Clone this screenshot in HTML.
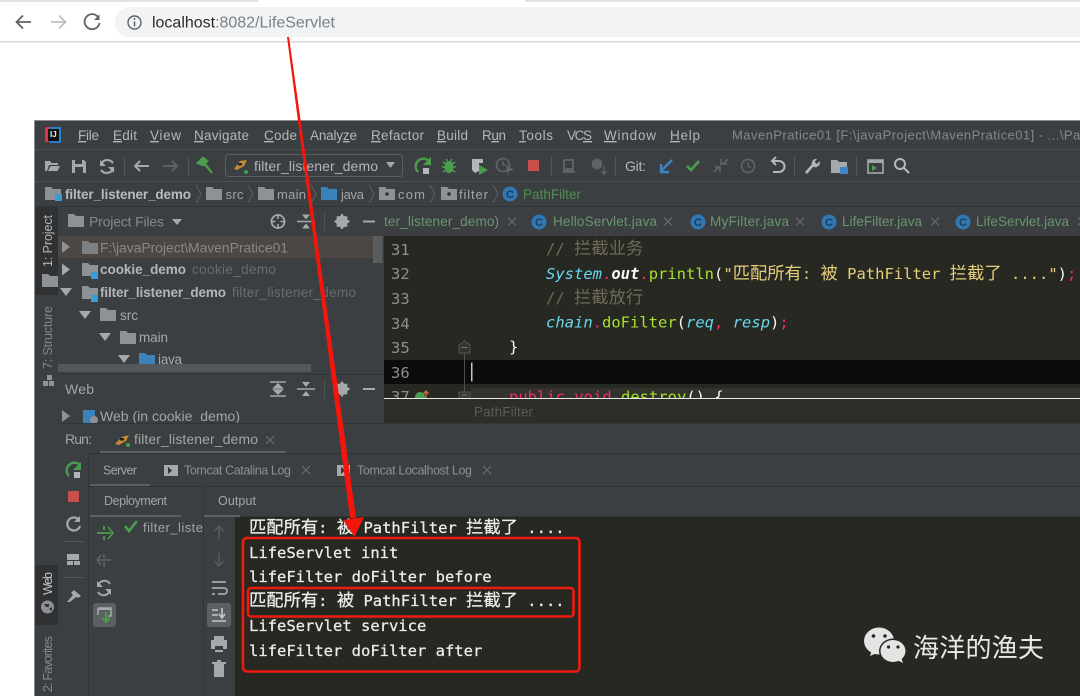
<!DOCTYPE html>
<html lang="zh"><head><meta charset="utf-8"><title>LifeServlet</title>
<style>
html,body{margin:0;padding:0;background:#fff;width:1080px;height:696px;overflow:hidden}
svg{display:block;position:absolute;left:0;top:0;filter:blur(.35px)}
text{font-family:"Liberation Sans","Noto Sans CJK SC",sans-serif;white-space:pre}
.m{font-size:13.5px;fill:#b4b6b8}
.g{font-size:13px;fill:#a2a5a7}
.t{font-size:13.5px;fill:#6a9470}
.x{stroke:#6a6d6f;stroke-width:1.2;fill:none}
.mono,.mono text{font-family:"DejaVu Sans Mono","Liberation Mono","Noto Sans CJK SC",monospace;font-size:15.5px}
.cj{font-family:"Noto Sans CJK SC",sans-serif;font-size:17.3px}
.con{fill:#ececec;stroke:#ececec;stroke-width:.25px}
.ic{fill:none;stroke:#a6a9ab;stroke-width:2}
.dim{fill:none;stroke:#5f6264;stroke-width:2}
</style></head><body>
<svg width="1080" height="696" viewBox="0 0 1080 696" xmlns="http://www.w3.org/2000/svg">
<defs>
<path id="f" d="M0 0h6l2 2h8v11H0z"/>
<g id="xm"><path class="x" d="M-4-4L4 4M4-4L-4 4"/></g>
<g id="chev"><path d="M0-9L5 0L0 9" fill="none" stroke="#5e6163" stroke-width="1"/></g>
<path id="ar" d="M0-6L8 0L0 6z"/>
<path id="ad" d="M-6 0H6L0 8z"/>
<g id="gear"><circle r="4.500" fill="none" stroke="#a6a9ab" stroke-width="3"/><path d="M0-7.500V7.500M-7.500 0H7.500M-5-5L5 5M5-5L-5 5" stroke="#a6a9ab" stroke-width="2.200"/></g>
<g id="cl"><path d="M-9 0H9" stroke="#a6a9ab" stroke-width="1.600"/><path d="M-4-7H4L0-2zM-4 7H4L0 2z" fill="#a6a9ab"/></g>
<g id="mn"><path d="M-6 0H6" stroke="#a6a9ab" stroke-width="2"/></g>
<g id="cc"><circle r="7.500" fill="#2f78b4"/><text x="-4" y="4" font-size="11" font-weight="bold" fill="#1b3c58">C</text></g>
</defs>

<!-- browser -->
<rect width="1080" height="41" fill="#fff"/>
<rect width="258" height="2" fill="#dee1e6"/><rect x="525" width="555" height="2" fill="#dee1e6"/>
<rect y="41" width="1080" height="1.500" fill="#d8dade"/>
<rect x="115" y="7" width="980" height="30" rx="15" fill="#f1f3f4"/>
<path d="M31 22H17M23 15.500L16.500 22L23 28.500" fill="none" stroke="#5f6368" stroke-width="1.800"/>
<path d="M51 22H65M59 15.500L65.500 22L59 28.500" fill="none" stroke="#bdc1c6" stroke-width="1.800"/>
<path d="M98 17A7.500 7.500 0 1 0 99.500 23" fill="none" stroke="#5f6368" stroke-width="1.800"/><path d="M99.500 14.500V20H94z" fill="#5f6368"/>
<circle cx="134.500" cy="22.500" r="6.500" fill="none" stroke="#5f6368" stroke-width="1.400"/><path d="M134.500 21.500V26.500M134.500 18V19.800" stroke="#5f6368" stroke-width="1.500"/>
<text x="152" y="27.500" font-size="16" textLength="183" lengthAdjust="spacingAndGlyphs" fill="#7b8084"><tspan fill="#2b2b2b">localhost</tspan>:8082/LifeServlet</text>

<!-- IDE base -->
<rect x="34" y="120" width="1046" height="576" fill="#3c3f41"/>
<rect x="34" y="120" width="1046" height="1" fill="#8b8d8e"/>
<rect x="34" y="120" width="1" height="576" fill="#8b8d8e"/>
<rect x="35" y="149" width="1045" height="1" fill="#4e4f4d"/>
<rect x="35" y="181" width="1045" height="1" fill="#4e4f4d"/>
<rect x="35" y="206" width="1045" height="1" fill="#323537"/>

<!-- logo -->
<rect x="45" y="127" width="15" height="15" rx="2" fill="#e0304f"/>
<path d="M50 127h11v16H50z" fill="#2a7fc9"/>
<rect x="48" y="129" width="11" height="12" fill="#111"/>
<text x="50" y="137" font-size="8" font-weight="bold" fill="#eee">IJ</text>

<!-- menu -->
<g class="m">
<text class="m" x="78" y="140" textLength="21"><tspan text-decoration="underline">F</tspan>ile</text>
<text class="m" x="113" y="140" textLength="24"><tspan text-decoration="underline">E</tspan>dit</text>
<text class="m" x="150" y="140" textLength="31"><tspan text-decoration="underline">V</tspan>iew</text>
<text class="m" x="194" y="140" textLength="55"><tspan text-decoration="underline">N</tspan>avigate</text>
<text class="m" x="264" y="140" textLength="33"><tspan text-decoration="underline">C</tspan>ode</text>
<text class="m" x="310" y="140" textLength="47">Analy<tspan text-decoration="underline">z</tspan>e</text>
<text class="m" x="371" y="140" textLength="53"><tspan text-decoration="underline">R</tspan>efactor</text>
<text class="m" x="437" y="140" textLength="31"><tspan text-decoration="underline">B</tspan>uild</text>
<text class="m" x="482" y="140" textLength="24">R<tspan text-decoration="underline">u</tspan>n</text>
<text class="m" x="519" y="140" textLength="34"><tspan text-decoration="underline">T</tspan>ools</text>
<text class="m" x="567" y="140" textLength="25">VC<tspan text-decoration="underline">S</tspan></text>
<text class="m" x="604" y="140" textLength="52"><tspan text-decoration="underline">W</tspan>indow</text>
<text class="m" x="670" y="140" textLength="30"><tspan text-decoration="underline">H</tspan>elp</text>
</g>
<text x="732" y="139.500" font-size="13" fill="#85888a" textLength="360" lengthAdjust="spacing">MavenPratice01 [F:\javaProject\MavenPratice01] - ...\Path</text>

<!-- toolbar -->
<path d="M45 171V161h5l1.500 2H58v2H49l-2 6zM48 171l2.500-5H60l-2.500 5z" fill="#a6a9ab"/>
<path d="M72 160h12l2 2v11H72z" fill="#a6a9ab"/><rect x="75" y="160" width="7" height="4" fill="#3c3f41"/><rect x="75" y="167" width="8" height="6" fill="#3c3f41"/>
<path d="M113 163A7 7 0 0 0 101 164M101 170A7 7 0 0 0 113 169" fill="none" stroke="#a6a9ab" stroke-width="2.200"/><path d="M100 160v6h6zM114 173v-6h-6z" fill="#a6a9ab"/>
<rect x="124" y="156" width="1" height="20" fill="#525557"/>
<path d="M149 166H135M140 161L135 166L140 171" class="ic"/>
<path d="M163 166H177M172 161L177 166L172 171" class="dim"/>
<rect x="188" y="156" width="1" height="20" fill="#525557"/>
<path d="M198 163L203 158L207 161L203 165zM204 163L212 173" fill="#4a9d4c" stroke="#4a9d4c" stroke-width="2.400"/>
<rect x="225.500" y="154.500" width="177" height="22" rx="3" fill="none" stroke="#5c5f61" stroke-width="1"/>
<path d="M234 169L240 161L247 160L244 166L237 170z" fill="#c48a3a"/><circle cx="246" cy="172" r="2" fill="#3fa34a"/><rect x="238" y="163" width="4" height="2.500" fill="#222"/>
<text x="254" y="171" font-size="14" fill="#b4b6b8" textLength="124">filter_listener_demo</text>
<path d="M386 162H395L390.500 168z" fill="#a6a9ab"/>
<path d="M429 161A7 7 0 1 0 418 172" fill="none" stroke="#4a9d4c" stroke-width="2.400"/><path d="M431 157V165H423z" fill="#4a9d4c"/><rect x="423" y="168" width="6" height="6" fill="#b4b6b8"/>
<ellipse cx="449" cy="167" rx="4.500" ry="6" fill="#4a9d4c"/><path d="M443 162l3 2M455 162l-3 2M442 167h14M443 172l3-2M455 172l-3-2M446 159l1.500 2M452 159l-1.500 2" stroke="#4a9d4c" stroke-width="1.600"/>
<path d="M472 159H483V163H479V171L475 173L472 170z" fill="#b4b6b8"/><path d="M479 165L488 170L479 175z" fill="#4a9d4c"/>
<circle cx="503" cy="165" r="6.500" fill="none" stroke="#5f6264" stroke-width="1.800"/><path d="M503 161v4h3" stroke="#5f6264" stroke-width="1.400" fill="none"/><path d="M506 165L514 170L509 171L508 176z" fill="#5f6264"/>
<rect x="528" y="160" width="11" height="11" fill="#c8504a"/>
<rect x="551" y="156" width="1" height="20" fill="#525557"/>
<path d="M564 160H573V170M564 160V171" class="dim" stroke-width="1.500"/><path d="M562 173L566 168H572L576 173z" fill="#5f6264"/>
<path d="M592 161L597 158L602 161V167L597 170L592 167z" fill="#5f6264"/><path d="M604 166V174M601.500 171.500L604 174L606.500 171.500" stroke="#5f6264" fill="none" stroke-width="1.400"/>
<rect x="615" y="156" width="1" height="20" fill="#525557"/>
<text x="625" y="171" font-size="14" fill="#b4b6b8" textLength="21">Git:</text>
<path d="M672 160L662 170" stroke="#3d85c6" stroke-width="2.400"/><path d="M661 164V172H669" fill="none" stroke="#3d85c6" stroke-width="2.400"/>
<path d="M687 166L691 170L699 161" fill="none" stroke="#4a9d4c" stroke-width="2.800"/>
<path d="M714 172L719 167M723 164L728 159M721 159V164H727M715 167H720V172" fill="none" stroke="#5f6264" stroke-width="1.700"/>
<circle cx="748" cy="166" r="6.500" fill="none" stroke="#5f6264" stroke-width="1.700"/><path d="M748 162V166L751 168" fill="none" stroke="#5f6264" stroke-width="1.400"/>
<path d="M772 161H779A5 5 0 0 1 779 172H773" fill="none" stroke="#b4b6b8" stroke-width="2"/><path d="M776 157L772 161L776 165" fill="none" stroke="#b4b6b8" stroke-width="2"/>
<rect x="794" y="156" width="1" height="20" fill="#525557"/>
<path d="M806 173L813 165" stroke="#b4b6b8" stroke-width="2.800"/><path d="M812 165A4.500 4.500 0 0 1 817 159L814.500 162L817 164L819.500 161A4.500 4.500 0 0 1 814 167z" fill="#b4b6b8"/>
<use href="#f" x="831" y="160" fill="#a6a9ab"/><rect x="840" y="167" width="8" height="7" fill="#3d85c6"/>
<rect x="856" y="156" width="1" height="20" fill="#525557"/>
<rect x="868" y="160" width="15" height="13" fill="none" stroke="#a6a9ab" stroke-width="1.600"/><rect x="868" y="160" width="15" height="3" fill="#a6a9ab"/><path d="M872 165L877 168L872 171z" fill="#4a9d4c"/>
<circle cx="900" cy="164" r="5" fill="none" stroke="#b4b6b8" stroke-width="2"/><path d="M904 168L909 173" stroke="#b4b6b8" stroke-width="2.200"/>

<!-- breadcrumb -->
<use href="#f" x="45" y="187" fill="#8e9296"/><rect x="55" y="194" width="7" height="7" fill="#3a9bd5"/>
<text x="65" y="199" font-size="13.500" font-weight="bold" fill="#b8babc" textLength="126">filter_listener_demo</text>
<use href="#chev" x="196" y="194"/>
<use href="#f" x="206" y="187" fill="#8e9296"/><text class="g" x="225.500" y="199" textLength="18">src</text>
<use href="#chev" x="248" y="194"/>
<use href="#f" x="258" y="187" fill="#8e9296"/><text class="g" x="277" y="199" textLength="29">main</text>
<use href="#chev" x="311" y="194"/>
<use href="#f" x="321" y="187" fill="#3a82b8"/><text class="g" x="341" y="199" textLength="23">java</text>
<use href="#chev" x="369" y="194"/>
<use href="#f" x="379" y="187" fill="#8e9296"/><circle cx="387" cy="194" r="1.800" fill="#333"/><text class="g" x="398" y="199" textLength="27">com</text>
<use href="#chev" x="430" y="194"/>
<use href="#f" x="441" y="187" fill="#8e9296"/><circle cx="449" cy="194" r="1.800" fill="#333"/><text class="g" x="459" y="199" textLength="29">filter</text>
<use href="#chev" x="493" y="194"/>
<use href="#cc" x="510" y="194"/>
<text x="523" y="199" font-size="13.500" fill="#4f8f4f" textLength="58">PathFilter</text>

<!-- left stripe -->
<rect x="35" y="207" width="23" height="489" fill="#3c3f41"/>
<rect x="35" y="207" width="23" height="88" fill="#2f3133"/>
<rect x="35" y="565" width="23" height="60" fill="#2f3133"/>
<text transform="translate(52,267) rotate(-90)" font-size="12.500" fill="#b4b6b8" textLength="52">1: Project</text>
<use href="#f" x="42" y="273" fill="#8e9296" transform="translate(0,1)"/>
<text transform="translate(52,369) rotate(-90)" font-size="12.500" fill="#85888a" textLength="63">7: Structure</text>
<path d="M43 381h5v5h-5zM49 381h5v5h-5zM47 375h5v5h-5z" fill="#8e9296"/>
<text transform="translate(52,595) rotate(-90)" font-size="12.500" fill="#c0c2c4" textLength="23">Web</text>
<circle cx="47.500" cy="607" r="6.500" fill="#8e9296"/><path d="M44 604h5v3h-3zM49 609l3-2v4z" fill="#2f3133"/>
<text transform="translate(52,692) rotate(-90)" font-size="12.500" fill="#85888a" textLength="56">2: Favorites</text>

<!-- project panel -->
<use href="#f" x="68" y="214" fill="#8e9296"/>
<text x="89" y="226.500" font-size="14" fill="#85888a" textLength="75">Project Files</text>
<path d="M172 219H182L177 225z" fill="#a6a9ab"/>
<circle cx="278" cy="221.500" r="6.500" fill="none" stroke="#a6a9ab" stroke-width="1.800"/><path d="M278 214V219M278 224V229M270.500 221.500H275.500M280.500 221.500H285.500" stroke="#a6a9ab" stroke-width="1.600"/>
<use href="#cl" x="306" y="221.500"/>
<rect x="324" y="211" width="1" height="20" fill="#505355"/>
<use href="#gear" x="342" y="221.500"/>
<use href="#mn" x="369" y="221.500"/>
<rect x="58" y="236" width="315" height="22" fill="#4c4743"/>
<rect x="373" y="236" width="9.500" height="27" fill="#5a5d5e"/>
<use href="#ar" x="62" y="247" fill="#8e9296"/>
<use href="#f" x="82" y="241" fill="#7d8184"/>
<text x="100" y="252.500" font-size="14" fill="#85888a" textLength="188">F:\javaProject\MavenPratice01</text>
<use href="#ar" x="62" y="269.500" fill="#a6a9ab"/>
<use href="#f" x="82" y="263" fill="#8e9296"/><rect x="91" y="272" width="7" height="7" fill="#3a9bd5"/>
<text x="100" y="274" font-size="13.500" font-weight="bold" fill="#b4b6b8" textLength="86">cookie_demo</text>
<text x="192" y="274" font-size="13.500" fill="#696c6e" textLength="84">cookie_demo</text>
<use href="#ad" x="66" y="288" fill="#a6a9ab"/>
<use href="#f" x="82" y="286" fill="#8e9296"/><rect x="91" y="295" width="7" height="7" fill="#3a9bd5"/>
<text x="100" y="297" font-size="13.500" font-weight="bold" fill="#b4b6b8" textLength="126">filter_listener_demo</text>
<text x="232" y="297" font-size="13.500" fill="#696c6e" textLength="124">filter_listener_demo</text>
<use href="#ad" x="85" y="311" fill="#a6a9ab"/>
<use href="#f" x="100" y="308" fill="#8e9296"/><text x="120" y="320" font-size="13.500" fill="#a6a9ab" textLength="18">src</text>
<use href="#ad" x="105" y="333" fill="#a6a9ab"/>
<use href="#f" x="120" y="331" fill="#8e9296"/><text x="139" y="342" font-size="13.500" fill="#a6a9ab" textLength="29">main</text>
<use href="#ad" x="124" y="355" fill="#a6a9ab"/>
<use href="#f" x="139" y="353" fill="#3a82b8"/><text x="158" y="364" font-size="13.500" fill="#a6a9ab" textLength="24">java</text>
<rect x="58" y="364" width="253" height="8" fill="#55585a"/>
<rect x="58" y="374" width="326" height="1" fill="#323537"/>
<text x="65" y="394" font-size="14" fill="#a2a5a7" textLength="29">Web</text>
<path d="M270 382H286M270 396H286M278 384L274 388H282zM278 394L274 390H282z" stroke="#a6a9ab" stroke-width="1.500" fill="#a6a9ab"/>
<use href="#cl" x="306" y="389"/>
<rect x="324" y="379" width="1" height="20" fill="#505355"/>
<use href="#gear" x="342" y="389"/>
<use href="#mn" x="369" y="389"/>
<use href="#ar" x="62" y="416" fill="#8e9296"/>
<rect x="83" y="410" width="12" height="13" fill="#3a82b8"/><circle cx="94" cy="420" r="4" fill="#8e9296"/>
<text x="100" y="421" font-size="14" fill="#a2a5a7" textLength="140">Web (in cookie_demo)</text>

<!-- editor tabs -->
<text class="t" x="384" y="226" textLength="115">ter_listener_demo)</text><use href="#xm" x="512" y="221.500"/>
<use href="#cc" x="539" y="222"/><text class="t" x="553" y="226" textLength="104">HelloServlet.java</text><use href="#xm" x="668" y="221.500"/>
<use href="#cc" x="698" y="222"/><text class="t" x="710" y="226" textLength="79">MyFilter.java</text><use href="#xm" x="800" y="221.500"/>
<use href="#cc" x="829" y="222"/><text class="t" x="842" y="226" textLength="80">LifeFilter.java</text><use href="#xm" x="935" y="221.500"/>
<use href="#cc" x="963" y="222"/><text class="t" x="976" y="226" textLength="93">LifeServlet.java</text><use href="#xm" x="1082" y="221.500"/>

<!-- editor -->
<rect x="384" y="236" width="696" height="162" fill="#272822"/>
<rect x="384" y="360" width="696" height="24" fill="#0b0c0c"/>
<rect x="471" y="388" width="609" height="10" fill="#3a3b36" opacity=".6"/>
<path d="M464.500 340V396" stroke="#4e4f4b" stroke-width="1"/>
<path d="M459 345L464.500 341L470 345V353H459zM459 392H470V398H459z" fill="#33342f" stroke="#55564f"/>
<path d="M461.500 347.500H467.500M461.500 395H467.500" stroke="#7a7b74" stroke-width="1"/>
<rect x="471" y="362.500" width="1.500" height="19" fill="#c8c8c8"/>
<g class="mono" fill="#8f908a">
<text x="391" y="255">31</text><text x="391" y="279">32</text><text x="391" y="304">33</text><text x="391" y="329">34</text><text x="391" y="353">35</text><text x="391" y="378">36</text><text x="391" y="402">37</text>
</g>
<circle cx="420" cy="397" r="5" fill="#4a9d4c"/><path d="M426 391V398M423.500 394L426 391L428.500 394" stroke="#c8603a" fill="none" stroke-width="1.500"/>
<g class="mono">
<text x="546" y="254" fill="#6e6a58">// <tspan class="cj">拦截业务</tspan></text>
<text x="546" y="279" fill="#f8f8f2"><tspan fill="#66d9ef" font-style="italic">System</tspan><tspan fill="#f92672">.</tspan><tspan font-weight="bold" font-style="italic">out</tspan><tspan fill="#f92672">.</tspan><tspan fill="#a6e22e">println</tspan>(<tspan fill="#e6cf7a">"<tspan class="cj">匹配所有</tspan>: <tspan class="cj">被</tspan> PathFilter <tspan class="cj">拦截了</tspan> ...."</tspan>)<tspan fill="#f92672">;</tspan></text>
<text x="546" y="303" fill="#6e6a58">// <tspan class="cj">拦截放行</tspan></text>
<text x="546" y="327.500" fill="#f8f8f2"><tspan fill="#66d9ef" font-style="italic">chain</tspan><tspan fill="#f92672">.</tspan><tspan fill="#a6e22e">doFilter</tspan>(<tspan fill="#66d9ef" font-style="italic">req</tspan><tspan fill="#f92672">,</tspan> <tspan fill="#66d9ef" font-style="italic">resp</tspan>)<tspan fill="#f92672">;</tspan></text>
<text x="509" y="352" fill="#f8f8f2">}</text>
<text x="509" y="402" fill="#f92672">public void <tspan fill="#a6e22e">destroy</tspan><tspan fill="#f8f8f2">() {</tspan></text>
</g>
<rect x="384" y="399" width="696" height="24" fill="#2d2e29"/>
<rect x="384" y="398" width="696" height="1" fill="#e8e8e8"/>
<text x="474" y="416.500" font-size="13.500" fill="#5b5c57" textLength="59">PathFilter</text>

<!-- run panel -->
<rect x="58" y="423" width="1022" height="273" fill="#3c3f41"/>
<rect x="58" y="423" width="1022" height="1" fill="#323537"/>
<text x="65" y="444" font-size="14" fill="#a2a5a7" textLength="27">Run:</text>
<path d="M115 444L122 437L129 435L126 441L119 445z" fill="#c48a3a"/><rect x="120" y="438" width="4" height="2.500" fill="#222"/><circle cx="128" cy="445" r="2" fill="#3fa34a"/>
<text x="134" y="444" font-size="14" fill="#a2a5a7" textLength="124">filter_listener_demo</text>
<use href="#xm" x="270" y="440"/>
<rect x="100" y="451" width="186" height="2.500" fill="#5c6164"/>
<rect x="88" y="453" width="992" height="1" fill="#323537"/>
<rect x="88" y="454" width="1" height="242" fill="#323537"/>
<path d="M80 465A7 7 0 1 0 69 476" fill="none" stroke="#4a9d4c" stroke-width="2.400"/><path d="M81 462V470H73z" fill="#4a9d4c"/><rect x="74" y="472" width="6" height="6" fill="#b4b6b8"/>
<rect x="68" y="491" width="11" height="11" fill="#c8504a"/>
<path d="M78 519A6.500 6.500 0 1 0 80 526" fill="none" stroke="#a6a9ab" stroke-width="2.200"/><path d="M80 516V522H74z" fill="#a6a9ab"/>
<rect x="64" y="541" width="20" height="1" fill="#55585a"/>
<path d="M67 554h12v6H67zM67 561h6v4h-6zM74 561h6v4h-6z" fill="#a6a9ab"/>
<rect x="64" y="577" width="20" height="1" fill="#55585a"/>
<path d="M67 602L73 595L71 593L74 590L81 596L78 598L76 597L70 602z" fill="#a6a9ab"/>

<text x="103" y="474.500" font-size="12.500" fill="#a2a5a7" textLength="34">Server</text>
<rect x="90" y="484" width="60" height="2" fill="#5c6164"/>
<rect x="164" y="465" width="14" height="11" fill="#a6a9ab"/><path d="M168 467L172 470.500L168 474z" fill="#333"/>
<text x="184" y="474.500" font-size="12.500" fill="#8c8f91" textLength="107">Tomcat Catalina Log</text>
<use href="#xm" x="306" y="470"/>
<rect x="337" y="465" width="13" height="11" fill="#a6a9ab"/><path d="M341 467L345 470.500L341 474z" fill="#333"/>
<text x="357" y="474.500" font-size="12.500" fill="#8c8f91" textLength="115">Tomcat Localhost Log</text>
<use href="#xm" x="487" y="470"/>
<rect x="88" y="486" width="992" height="1" fill="#323537"/>
<text x="104" y="505" font-size="12.500" fill="#a2a5a7" textLength="63">Deployment</text>
<text x="218" y="505" font-size="12.500" fill="#a2a5a7" textLength="38">Output</text>
<rect x="90" y="515" width="91" height="2" fill="#5c6164"/>
<rect x="204" y="515" width="36" height="2" fill="#5c6164"/>
<rect x="240" y="516" width="840" height="1" fill="#323537"/>
<rect x="203" y="487" width="1" height="209" fill="#323537"/>
<path d="M125 526L129 531L137 521" fill="none" stroke="#4a9d4c" stroke-width="2.600"/>
<text x="143" y="532" font-size="13" fill="#a2a5a7" textLength="60">filter_liste</text>
<path d="M97 533H111M104 526V530M104 536V540" stroke="#4a9d4c" stroke-width="1.800"/><path d="M108 527L113 533L108 539" fill="none" stroke="#4a9d4c" stroke-width="1.600"/>
<path d="M97 560H111M104 554V558M104 562V567" stroke="#5f6264" stroke-width="1.800"/><path d="M101 555L97 560L101 565" fill="none" stroke="#5f6264" stroke-width="1.600"/>
<path d="M110 584A6.500 6.500 0 0 0 98 586M98 592A6.500 6.500 0 0 0 110 590" fill="none" stroke="#a6a9ab" stroke-width="2"/><path d="M97 581v6h6zM111 595v-6h-6z" fill="#a6a9ab"/>
<rect x="93" y="603" width="23" height="24" rx="3" fill="#5b6063"/>
<path d="M98 608H111V616H108" fill="none" stroke="#a6a9ab" stroke-width="1.600"/><path d="M98 608V615" stroke="#a6a9ab" stroke-width="1.600"/><rect x="98" y="608" width="13" height="2" fill="#a6a9ab"/><path d="M106 612V621M102.500 618L106 622L109.500 618" fill="none" stroke="#4a9d4c" stroke-width="2"/>
<path d="M219 539V527M214.500 531L219 526L223.500 531" fill="none" stroke="#55585a" stroke-width="1.800"/>
<path d="M219 553V565M214.500 561L219 566L223.500 561" fill="none" stroke="#55585a" stroke-width="1.800"/>
<path d="M212 582H226M212 588H224A2.500 2.500 0 0 1 224 594H218M212 594H215" fill="none" stroke="#a6a9ab" stroke-width="1.700"/>
<rect x="207" y="603" width="24" height="24" rx="3" fill="#5b6063"/>
<path d="M212 610H218M212 615H218M212 621H226M222 608V617M219 614L222 618L225 614" fill="none" stroke="#c4c6c8" stroke-width="1.600"/>
<path d="M214 636h10v4h3v9h-4v3h-8v-3h-4v-9h3z" fill="#a6a9ab"/><rect x="215" y="646" width="8" height="4" fill="#3c3f41"/>
<path d="M214 664H224V677H214zM212 662H226V664H212z" fill="#a6a9ab"/><rect x="217" y="660" width="4" height="2" fill="#a6a9ab"/>

<!-- console -->
<rect x="235" y="517" width="845" height="179" fill="#272822"/>
<g class="mono">
<text class="con" x="249" y="533"><tspan class="cj">匹配所有</tspan>: <tspan class="cj">被</tspan> PathFilter <tspan class="cj">拦截了</tspan> ....</text>
<text class="con" x="249" y="558">LifeServlet init</text>
<text class="con" x="249" y="582">lifeFilter doFilter before</text>
<text class="con" x="249" y="606"><tspan class="cj">匹配所有</tspan>: <tspan class="cj">被</tspan> PathFilter <tspan class="cj">拦截了</tspan> ....</text>
<text class="con" x="249" y="631">LifeServlet service</text>
<text class="con" x="249" y="656">lifeFilter doFilter after</text>
</g>

<!-- annotations -->
<path d="M287 37L289 37L356 518L350 518z" fill="#f4160c"/>
<path d="M343 520L364 517L354.500 537z" fill="#f4160c"/>
<rect x="243" y="538" width="336.500" height="133.500" rx="4" fill="none" stroke="#ee1c10" stroke-width="2.600"/>
<rect x="248" y="588" width="325.500" height="28.500" rx="3" fill="none" stroke="#ee1c10" stroke-width="2.600"/>

<!-- watermark -->
<path d="M872 650L870 656L877 653z" fill="#e4e4e4"/>
<ellipse cx="879" cy="641" rx="15" ry="13.500" fill="#e4e4e4"/>
<circle cx="873.500" cy="636" r="1.800" fill="#272822"/><circle cx="885" cy="636" r="1.800" fill="#272822"/>
<ellipse cx="893" cy="651" rx="14" ry="12.500" fill="#272822"/>
<ellipse cx="893" cy="651" rx="12.500" ry="11" fill="#e4e4e4"/>
<path d="M897 660L903 663L901 657z" fill="#e4e4e4"/>
<circle cx="888.500" cy="647" r="1.600" fill="#272822"/><circle cx="898" cy="647" r="1.600" fill="#272822"/>
<text x="913" y="657" font-size="26" fill="#e8e8e8" textLength="131" style="font-family:'Noto Sans CJK SC',sans-serif">海洋的渔夫</text>
</svg>
</body></html>
